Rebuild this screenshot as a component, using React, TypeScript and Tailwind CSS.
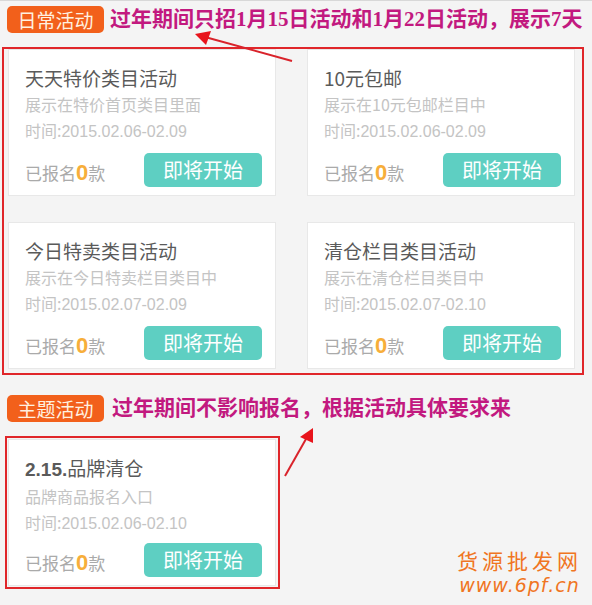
import React from "react";

type Card = {
  title: React.ReactNode;
  desc: string;
  time: string;
};

const daily: Card[] = [
  { title: "天天特价类目活动", desc: "展示在特价首页类目里面", time: "2015.02.06-02.09" },
  { title: "10元包邮", desc: "展示在10元包邮栏目中", time: "2015.02.06-02.09" },
  { title: "今日特卖类目活动", desc: "展示在今日特卖栏目类目中", time: "2015.02.07-02.09" },
  { title: "清仓栏目类目活动", desc: "展示在清仓栏目类目中", time: "2015.02.07-02.10" },
];

const ActivityCard = ({ title, desc, time }: Card) => (
  <div className="h-[147px] w-[268px] bg-white border border-[#e8e8e8] pl-[16px] pr-[13px] pt-[15px] pb-[8px] flex flex-col">
    <div className="text-[19px] leading-[26px] text-[#5a5a5a]">{title}</div>
    <div className="mt-[1px] text-[16px] leading-[24px] text-[#c4c4c4]">{desc}</div>
    <div className="mt-[2px] text-[16px] leading-[24px] text-[#c4c4c4]">
      时间:<span className="font-['Liberation_Sans',sans-serif]">{time}</span>
    </div>
    <div className="mt-auto flex items-end justify-between">
      <div className="text-[17px] leading-[24px] text-[#aaaaaa] mb-[2px]">
        已报名
        <span className="text-[22px] font-bold text-[#f7ae3a] font-['Liberation_Sans',sans-serif]">0</span>
        款
      </div>
      <button className="h-[34px] w-[118px] rounded-[5px] bg-[#5ecfc2] text-white text-[20px] leading-[34px]">
        即将开始
      </button>
    </div>
  </div>
);

const Tag = ({ children }: { children: React.ReactNode }) => (
  <div className="h-[27px] w-[97px] rounded-[5px] bg-[#f2601b] text-[19px] leading-[27px] text-[#fff1e0] text-center">
    {children}
  </div>
);

const Note = ({ children }: { children: React.ReactNode }) => (
  <div className="text-[21px] leading-[27px] font-bold text-[#c2197f] font-['Liberation_Serif','Noto_Sans_CJK_SC',serif]">
    {children}
  </div>
);

export default function App() {
  return (
    <div className="relative w-[592px] h-[605px] overflow-hidden bg-[#f4f4f4] border-t border-[#d8d8d8] font-['Noto_Sans_CJK_SC','Liberation_Sans',sans-serif]">
      <div className="flex items-center gap-[6px] pl-[7px] mt-[5px]">
        <Tag>日常活动</Tag>
        <Note>过年期间只招1月15日活动和1月22日活动，展示7天</Note>
      </div>

      <div className="ml-[2px] mt-[14px] w-[582px] h-[328px] border-2 border-[#e0262a] pl-[4px] pt-[0px] grid grid-cols-[268px_268px] gap-x-[31px] gap-y-[26px] content-start">
        {daily.map((c) => (
          <ActivityCard key={c.desc} {...c} />
        ))}
      </div>

      <div className="flex items-center gap-[8px] pl-[7px] mt-[20px]">
        <Tag>主题活动</Tag>
        <Note>过年期间不影响报名，根据活动具体要求来</Note>
      </div>

      <div className="ml-[5px] mt-[14px] w-[275px] border-2 border-[#e0262a] pl-[1px] py-[1px]">
        <ActivityCard
          title={
            <>
              <span className="font-bold font-['Liberation_Sans',sans-serif]">2.15.</span>品牌清仓
            </>
          }
          desc="品牌商品报名入口"
          time="2015.02.06-02.10"
        />
      </div>

      <div className="absolute right-[10px] bottom-[10px] text-[#f07522] text-center leading-none">
        <div className="text-[21px] tracking-[4px]">货源批发网</div>
        <div className="mt-[5px] text-[19px] italic font-['DejaVu_Sans',sans-serif] tracking-[1px]">www.6pf.cn</div>
      </div>

      <svg className="absolute left-0 top-0" width="592" height="605" viewBox="0 0 592 605">
        <line x1="292" y1="60" x2="205" y2="36" stroke="#d9232b" strokeWidth="2" />
        <polygon points="195,33 211,30 206,44" fill="#e8141c" />
        <line x1="285" y1="475" x2="306" y2="438" stroke="#d9232b" strokeWidth="2" />
        <polygon points="313,427 300,436 313,442" fill="#e8141c" />
      </svg>
    </div>
  );
}
